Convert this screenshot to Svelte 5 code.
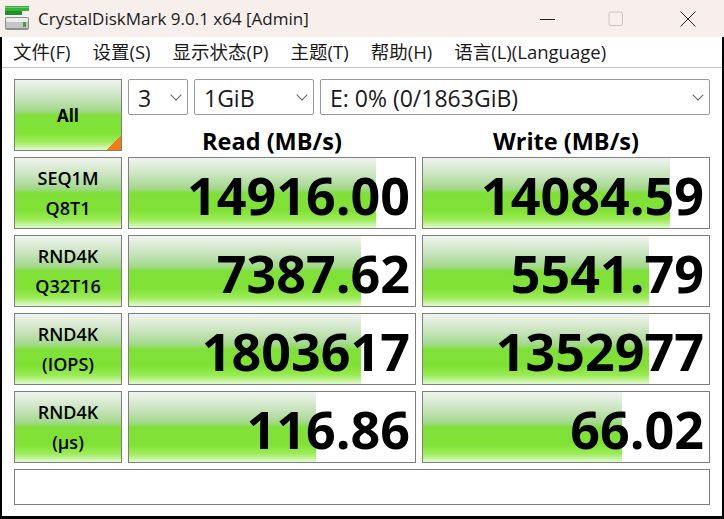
<script>
	const menus = ['文件(F)', '设置(S)', '显示状态(P)', '主题(T)', '帮助(H)', '语言(L)(Language)'];

	const rows = [
		{ top: 'SEQ1M', bottom: 'Q8T1', read: '14916.00', readWidth: 86.5, write: '14084.59', writeWidth: 86.5 },
		{ top: 'RND4K', bottom: 'Q32T16', read: '7387.62', readWidth: 81, write: '5541.79', writeWidth: 79 },
		{ top: 'RND4K', bottom: '(IOPS)', read: '1803617', readWidth: 81, write: '1352977', writeWidth: 79 },
		{ top: 'RND4K', bottom: '(μs)', read: '116.86', readWidth: 65.5, write: '66.02', writeWidth: 69.5 }
	];
</script>

<div class="window">
	<header class="titlebar">
		<svg class="app-icon" viewBox="0 0 24 24" width="24" height="24" aria-hidden="true">
			<rect x="0" y="0" width="24" height="5" fill="#35b03a" />
			<rect x="0" y="1" width="24" height="1" fill="#6fd06a" />
			<rect x="0" y="5" width="17" height="4" fill="#1f8f2c" />
			<rect x="0" y="11" width="24" height="13" rx="2" fill="#8d8f8d" />
			<rect x="1" y="12" width="22" height="4" rx="1" fill="#eceeec" />
			<rect x="1" y="16" width="22" height="6" fill="#c4c6c6" />
			<rect x="18" y="16" width="3" height="5" fill="#4e9a4a" />
		</svg>
		<span class="title">CrystalDiskMark 9.0.1 x64 [Admin]</span>
		<div class="controls">
			<svg viewBox="0 0 16 16" width="16" height="16" aria-hidden="true">
				<path d="M0 8.500h15" stroke="#222" fill="none" />
			</svg>
			<svg viewBox="0 0 16 16" width="16" height="16" aria-hidden="true">
				<rect x="1" y="1" width="13.500" height="13.500" rx="2" stroke="#c9c5c2" fill="none" />
			</svg>
			<svg class="close" viewBox="0 0 16 16" width="16" height="16" aria-hidden="true">
				<path d="M.5.5l15 15M15.500.5l-15 15" stroke="#222" fill="none" />
			</svg>
		</div>
	</header>

	<div class="body">
		<nav class="menu">
			{#each menus as item}
				<span>{item}</span>
			{/each}
		</nav>

		<main class="panel">
			<div class="grid">
				<button class="all green" type="button">All<i class="corner"></i></button>
				<div class="top">
					<div class="selects">
						<div class="select count">3<span class="chev"></span></div>
						<div class="select size">1GiB<span class="chev"></span></div>
						<div class="select drive">E: 0% (0/1863GiB)<span class="chev"></span></div>
					</div>
					<div class="heads">
						<div>Read (MB/s)</div>
						<div>Write (MB/s)</div>
					</div>
				</div>

				{#each rows as row}
					<div class="label green"><span>{row.top}</span><span>{row.bottom}</span></div>
					<div class="results">
						<div class="value">
							<div class="bar green" style="width: {row.readWidth}%"></div>
							<span>{row.read}</span>
						</div>
						<div class="value">
							<div class="bar green" style="width: {row.writeWidth}%"></div>
							<span>{row.write}</span>
						</div>
					</div>
				{/each}
			</div>
			<div class="status"></div>
		</main>
	</div>
</div>

<style>
	:global(body) {
		margin: 0;
		background: #fff;
	}

	.window {
		width: 724px;
		height: 519px;
		display: flex;
		flex-direction: column;
		font-family: 'Open Sans', 'Noto Sans CJK SC', sans-serif;
		color: #000;
		overflow: hidden;
	}

	.titlebar {
		height: 37px;
		flex: none;
		display: flex;
		align-items: center;
		background: #f6efeb;
		padding-left: 5px;
	}

	.app-icon {
		flex: none;
		margin-bottom: 1px;
	}

	.title {
		margin-left: 9px;
		font-size: 17px;
		color: #1a1a1a;
	}

	.controls {
		margin-left: auto;
		display: flex;
		gap: 52px;
		padding-right: 28px;
	}

	.close {
		margin-left: 4px;
	}

	.body {
		flex: 1;
		display: flex;
		flex-direction: column;
		border: solid #000;
		border-width: 0 2px 3px;
		min-height: 0;
	}

	.menu {
		height: 31px;
		flex: none;
		display: flex;
		align-items: center;
		gap: 22px;
		padding-left: 11px;
		padding-bottom: 2px;
		box-sizing: border-box;
		font-size: 18.500px;
		color: #1a1a1a;
		border-bottom: 1px solid #bfc0c0;
	}

	.panel {
		flex: 1;
		padding: 11px 12px 0;
		display: flex;
		flex-direction: column;
		gap: 6px;
	}

	.grid {
		display: grid;
		grid-template-columns: 108px 1fr;
		grid-template-rows: repeat(5, 72px);
		column-gap: 6px;
		row-gap: 6px;
	}

	.green {
		background: linear-gradient(
			#f0f4f0 0,
			#c8e4bc 25%,
			#a2d88a 44%,
			#80e03a 50%,
			#80e234 75%,
			#9cec58 88%,
			#e0fad0 100%
		);
	}

	.all,
	.label,
	.value,
	.select,
	.status {
		box-sizing: border-box;
		border: 1px solid #7f7f7f;
	}

	.all {
		position: relative;
		padding: 0;
		font: 700 17px 'Open Sans', sans-serif;
		color: #000;
	}

	.corner {
		position: absolute;
		right: 0;
		bottom: 0;
		width: 14px;
		height: 14px;
		background: linear-gradient(135deg, transparent 50%, #f47b16 50%);
	}

	.top {
		display: flex;
		flex-direction: column;
	}

	.selects {
		display: flex;
		gap: 6px;
	}

	.select {
		position: relative;
		height: 36px;
		display: flex;
		align-items: center;
		padding: 2px 0 0 9px;
		font-size: 23px;
		color: #1a1a1a;
		border-color: #9a9a9a;
		border-radius: 2px;
	}

	.count {
		width: 60px;
	}

	.size {
		width: 120px;
	}

	.drive {
		flex: 1;
	}

	.chev {
		position: absolute;
		right: 7px;
		top: 11px;
		width: 7px;
		height: 7px;
		border: solid #666;
		border-width: 0 1px 1px 0;
		transform: rotate(45deg);
	}

	.heads {
		flex: 1;
		display: grid;
		grid-template-columns: 288px 288px;
		column-gap: 6px;
		align-items: end;
		margin-bottom: -6px;
		text-align: center;
		font-size: 23.500px;
		line-height: 32px;
		font-weight: 700;
	}

	.label {
		display: flex;
		flex-direction: column;
		align-items: center;
		justify-content: center;
		gap: 8px;
		font-size: 18px;
		font-weight: 600;
		line-height: 22px;
	}

	.results {
		display: grid;
		grid-template-columns: 288px 288px;
		column-gap: 6px;
	}

	.value {
		position: relative;
		display: flex;
		align-items: center;
		justify-content: flex-end;
		padding: 2px 5px 0 0;
		font-size: 52px;
		font-weight: 700;
		overflow: hidden;
	}

	.bar {
		position: absolute;
		inset: 0 auto 0 0;
	}

	.value span {
		position: relative;
	}

	.status {
		height: 36px;
	}
</style>
